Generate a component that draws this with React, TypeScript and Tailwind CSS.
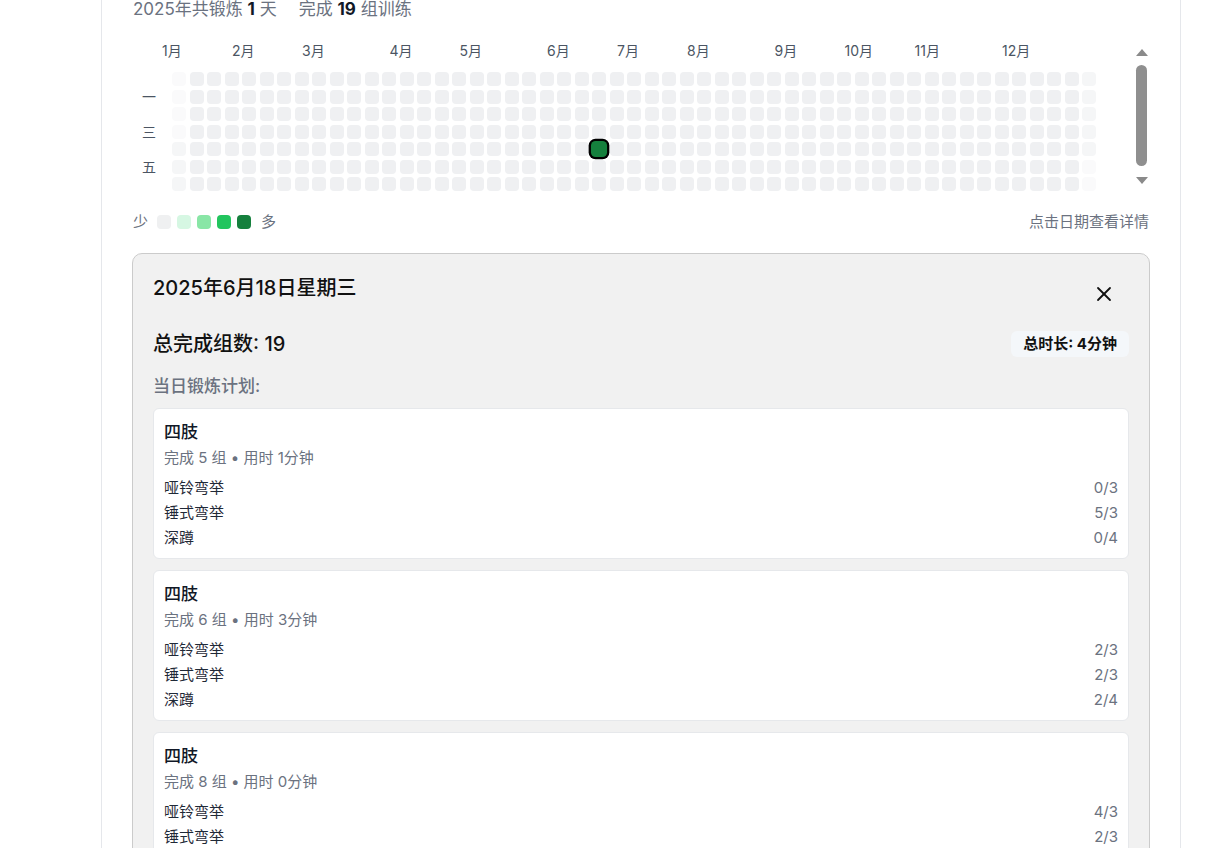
import React from "react";
import { X } from "lucide-react";

const MONTHS = [
  { label: "1月", col: 0 },
  { label: "2月", col: 4 },
  { label: "3月", col: 8 },
  { label: "4月", col: 13 },
  { label: "5月", col: 17 },
  { label: "6月", col: 22 },
  { label: "7月", col: 26 },
  { label: "8月", col: 30 },
  { label: "9月", col: 35 },
  { label: "10月", col: 39 },
  { label: "11月", col: 43 },
  { label: "12月", col: 48 },
];

const DAY_LABELS = ["", "一", "", "三", "", "五", ""];

const LEGEND = ["bg-[#eff0f1]", "bg-[#d6f7e3]", "bg-[#89e6a6]", "bg-[#22c55e]", "bg-[#15803d]"];

const WEEKS = 53;
const PITCH = 17.5;

const PLANS = [
  {
    title: "四肢",
    sets: 5,
    minutes: 1,
    items: [
      { name: "哑铃弯举", done: "0/3" },
      { name: "锤式弯举", done: "5/3" },
      { name: "深蹲", done: "0/4" },
    ],
  },
  {
    title: "四肢",
    sets: 6,
    minutes: 3,
    items: [
      { name: "哑铃弯举", done: "2/3" },
      { name: "锤式弯举", done: "2/3" },
      { name: "深蹲", done: "2/4" },
    ],
  },
  {
    title: "四肢",
    sets: 8,
    minutes: 0,
    items: [
      { name: "哑铃弯举", done: "4/3" },
      { name: "锤式弯举", done: "2/3" },
      { name: "深蹲", done: "2/4" },
    ],
  },
];

function HeatCell({ col, row }: { col: number; row: number }) {
  const offset = col * 7 + row - 4;
  const inYear = offset >= 0 && offset < 365;
  const selected = col === 24 && row === 4;
  const edge = col === 0 || col === WEEKS - 1;

  if (selected) {
    return (
      <div className="w-[14px] h-[14px] rounded-[4px] bg-[#15803d] ring-2 ring-black scale-[1.15]" />
    );
  }
  if (!inYear) {
    return <div className="w-[14px] h-[14px] rounded-[4px] bg-[#fafafb]" />;
  }
  return (
    <div
      className={`w-[14px] h-[14px] rounded-[4px] ${edge ? "bg-[#f5f6f7]" : "bg-[#eff0f2]"}`}
    />
  );
}

function Heatmap() {
  const cells: React.ReactNode[] = [];
  for (let c = 0; c < WEEKS; c++) {
    for (let r = 0; r < 7; r++) {
      cells.push(<HeatCell key={`${c}-${r}`} col={c} row={r} />);
    }
  }

  return (
    <div className="mt-5 flex">
      <div className="flex-1">
        {/* month labels */}
        <div className="relative h-5 ml-[39px] mb-[11px] text-[14px] leading-5 text-[#4b5563]">
          {MONTHS.map((m) => (
            <span
              key={m.label}
              className="absolute top-0 whitespace-nowrap"
              style={{ left: m.col * PITCH - 10 }}
            >
              {m.label}
            </span>
          ))}
        </div>

        <div className="flex">
          <div className="w-8 grid grid-rows-[repeat(7,14px)] gap-y-[3.5px] text-[14px] leading-[14px] text-[#4b5563] text-center">
            {DAY_LABELS.map((d, i) => (
              <span key={i}>{d}</span>
            ))}
          </div>
          <div className="ml-[7px] grid grid-flow-col grid-rows-[repeat(7,14px)] auto-cols-[14px] gap-[3.5px]">
            {cells}
          </div>
        </div>
      </div>

      {/* vertical scrollbar */}
      <div className="w-[15px] h-[150px] flex flex-col items-center pt-[8px]">
        <svg width="12" height="7" viewBox="0 0 12 7">
          <polygon points="6,0 12,7 0,7" fill="#8a8a8a" />
        </svg>
        <div className="mt-[9px] w-[11px] h-[101px] rounded-full bg-[#8f8f8f]" />
        <svg className="mt-[11px]" width="12" height="7" viewBox="0 0 12 7">
          <polygon points="0,0 12,0 6,7" fill="#8a8a8a" />
        </svg>
      </div>
    </div>
  );
}

function PlanCard({ plan }: { plan: (typeof PLANS)[number] }) {
  return (
    <div className="bg-white rounded-[6px] border border-[#e6e8eb] pt-[11px] px-[10px] pb-[7px]">
      <div className="text-[17px] leading-6 font-medium text-[#111827]">{plan.title}</div>
      <div className="mt-1 text-[15px] leading-5 text-[#6b7280]">
        完成 {plan.sets} 组 • 用时 {plan.minutes}分钟
      </div>
      <div className="mt-2">
        {plan.items.map((it) => (
          <div key={it.name} className="h-[25px] flex items-center justify-between text-[15px]">
            <span className="text-[#1f2937]">{it.name}</span>
            <span className="text-[#6b7280]">{it.done}</span>
          </div>
        ))}
      </div>
    </div>
  );
}

export default function App() {
  return (
    <div className="min-h-screen bg-white font-['Inter','Noto_Sans_CJK_SC',sans-serif] overflow-hidden">
      <div className="ml-[101px] w-[1080px] -mt-[27px] border-x border-[#e5e7eb] bg-white px-[31px] pt-6 pb-10">
        {/* summary */}
        <div className="text-[17px] leading-6 text-[#6b7280]">
          2025年共锻炼 <span className="font-bold text-[#111827]">1</span> 天
          <span className="ml-[22px]">
            完成 <span className="font-bold text-[#111827]">19</span> 组训练
          </span>
        </div>

        <Heatmap />

        {/* legend */}
        <div className="mt-[21px] h-5 flex items-center justify-between text-[15px] leading-5 text-[#6b7280]">
          <div className="flex items-center">
            <span>少</span>
            <div className="ml-[9px] flex items-center gap-[6px]">
              {LEGEND.map((c) => (
                <div key={c} className={`w-[14px] h-[14px] rounded-[4px] ${c}`} />
              ))}
            </div>
            <span className="ml-[10px]">多</span>
          </div>
          <span>点击日期查看详情</span>
        </div>

        {/* selected day detail */}
        <div className="mt-[21px] -mx-px rounded-[10px] border border-[#cbcbcb] bg-[#f1f1f1] p-5">
          <div className="flex items-start justify-between">
            <h3 className="text-[20px] leading-7 font-medium text-[#111]">2025年6月18日星期三</h3>
            <button type="button" className="mr-[5px] w-10 h-10 flex items-center justify-center text-[#111]">
              <X size={24} strokeWidth={1.8} />
            </button>
          </div>

          <div className="mt-[16px] h-7 flex items-center justify-between">
            <span className="text-[20px] font-medium text-[#111]">总完成组数: 19</span>
            <span className="px-3 py-[2px] rounded-md bg-[#f4f7fa] text-[15px] font-bold text-[#111]">
              总时长: 4分钟
            </span>
          </div>

          <div className="mt-[16px] text-[17px] leading-6 font-medium text-[#6b7280]">当日锻炼计划:</div>

          <div className="mt-[10px] flex flex-col gap-[11px]">
            {PLANS.map((p, i) => (
              <PlanCard key={i} plan={p} />
            ))}
          </div>
        </div>
      </div>
    </div>
  );
}
